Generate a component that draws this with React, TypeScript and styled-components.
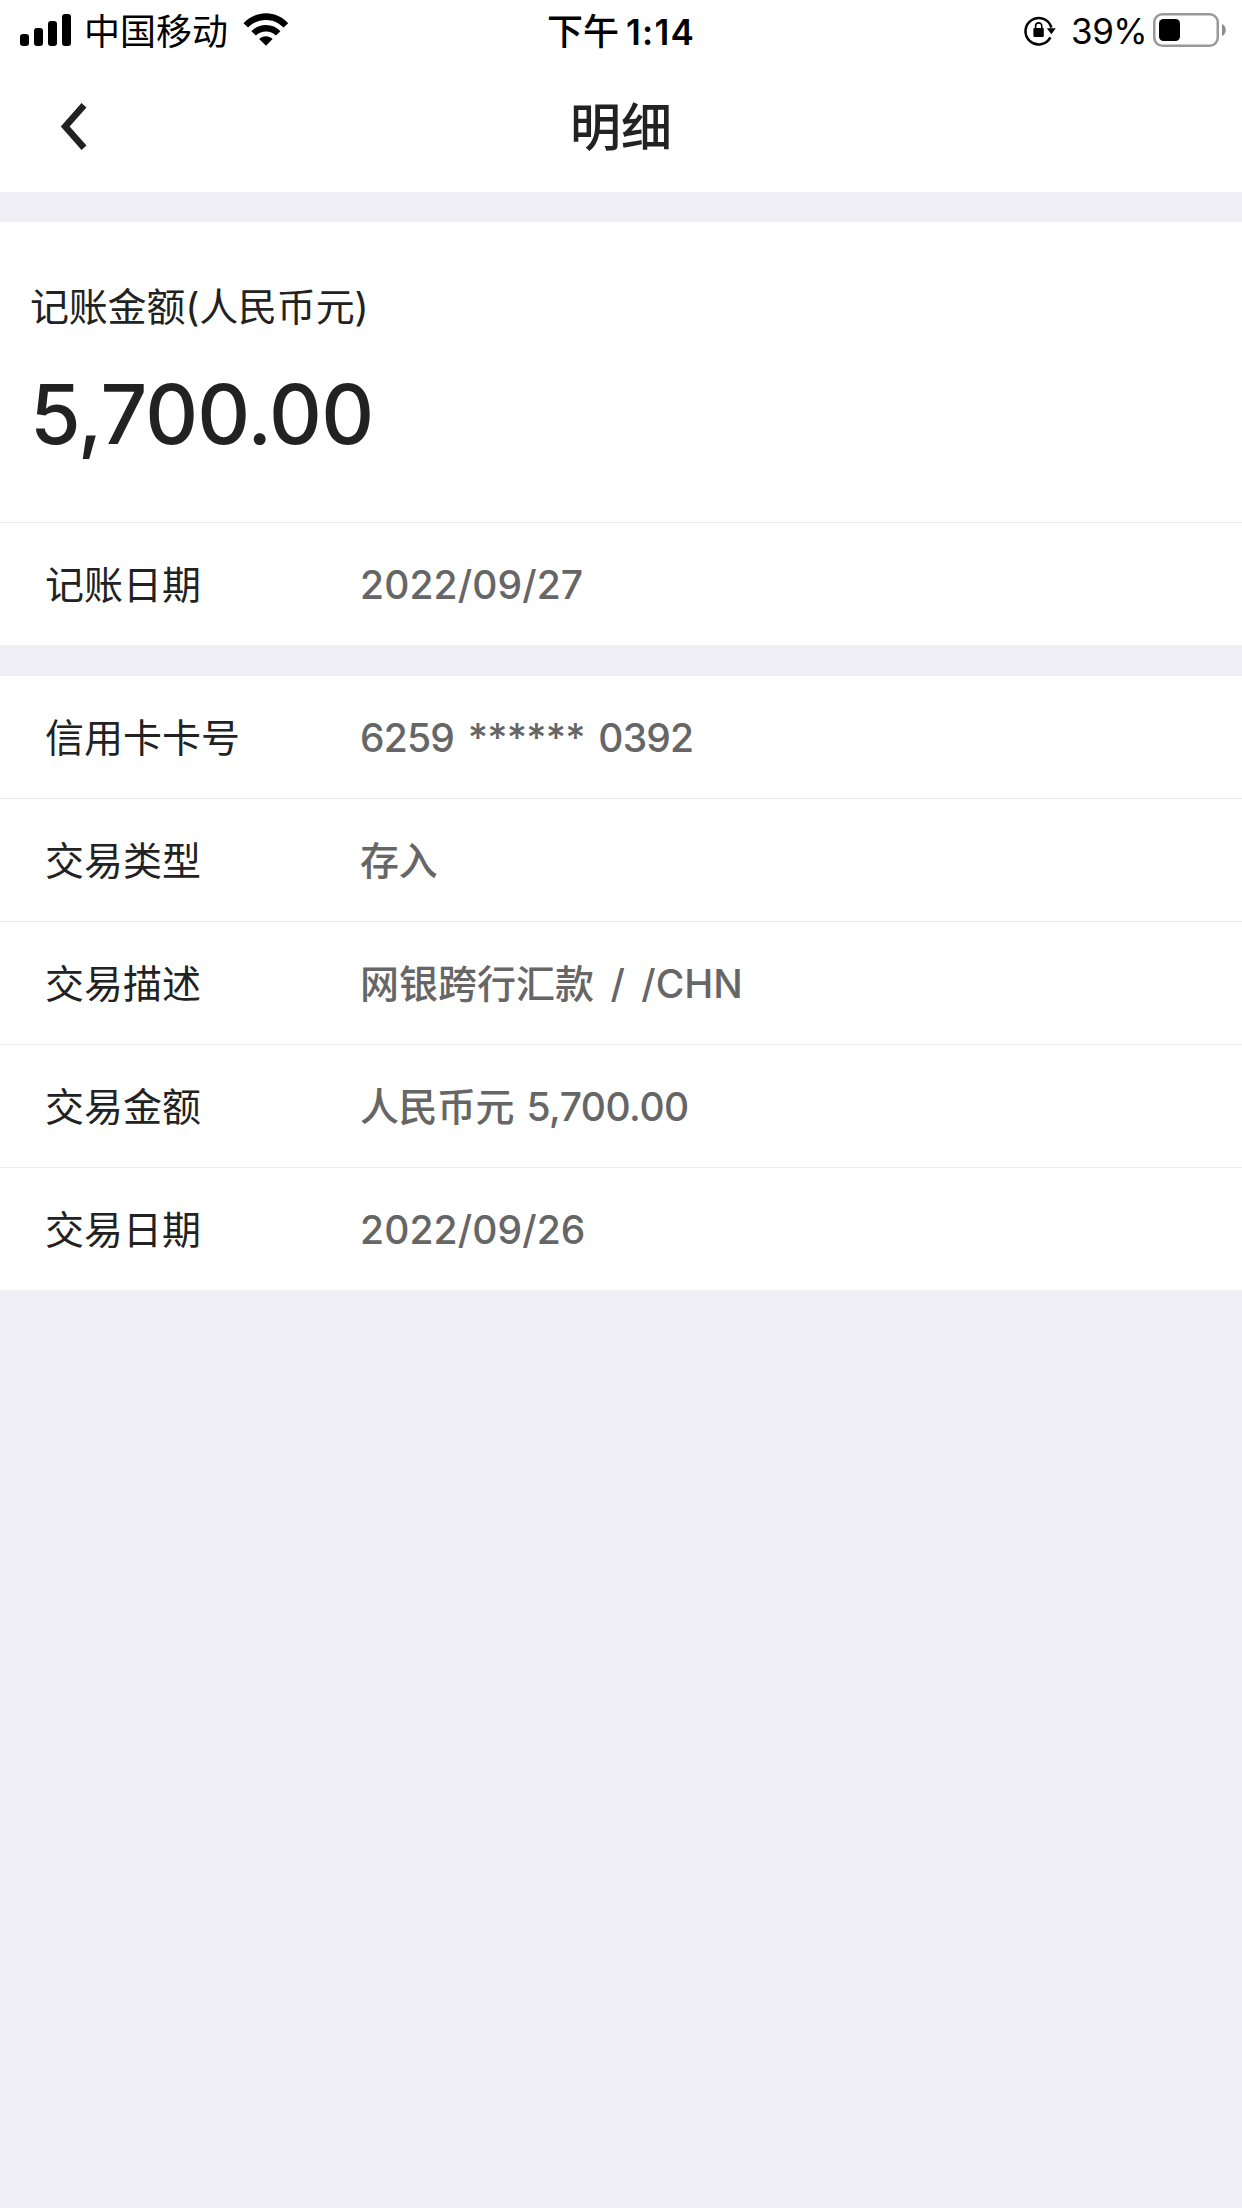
import React from "react";
import styled, { createGlobalStyle } from "styled-components";

type DetailItem = {
  label: string;
  value: string;
  spacing?: number;
  wordGap?: number;
};

const postingItems: DetailItem[] = [
  { label: "记账日期", value: "2022/09/27", spacing: 0.1 },
];

const tradeItems: DetailItem[] = [
  {
    label: "信用卡卡号",
    value: "6259 ****** 0392",
    spacing: -0.8,
    wordGap: 4,
  },
  { label: "交易类型", value: "存入", spacing: -0.5 },
  { label: "交易描述", value: "网银跨行汇款 / /CHN", wordGap: 6 },
  { label: "交易金额", value: "人民币元 5,700.00", spacing: -0.5, wordGap: 2.5 },
  { label: "交易日期", value: "2022/09/26", spacing: 0.1 },
];

const SignalIcon = () => (
  <svg width="52" height="32" viewBox="0 0 52 32">
    <rect x="0" y="20" width="9" height="12" rx="3" />
    <rect x="14" y="14" width="9" height="18" rx="3" />
    <rect x="28" y="7" width="9" height="25" rx="3" />
    <rect x="42" y="0" width="9" height="32" rx="3" />
  </svg>
);

const WifiIcon = () => (
  <svg width="46" height="34" viewBox="0 0 46 34">
    <path d="M0.5 10.2C6.5 4 14.3 0.3 23 0.3S39.5 4 45.2 10.2L40.6 14.6C35.8 9.6 29.8 6.9 23 6.9S10 9.6 5.1 14.6Z" />
    <path d="M8.3 18.2C12.2 14.2 17.2 12 23 12S33.6 14.2 37.4 18.2L32.9 22.5C30.1 19.8 26.8 18.4 23 18.4S15.7 19.8 12.9 22.5Z" />
    <path d="M16.2 26.1C20 22.3 25.8 22.3 29.6 26.1L23 32.8Z" />
  </svg>
);

const RotationLockIcon = () => (
  <svg width="33" height="30" viewBox="0 0 33 30" fill="none">
    <path
      d="M26.4 21.4A13.2 13.2 0 1 1 27.4 11.6"
      stroke="#000"
      strokeWidth="2.5"
    />
    <path d="M22.8 12.2H31.8L27.4 18.2Z" fill="#000" />
    <rect x="9.4" y="12" width="10.4" height="9" rx="1" fill="#000" />
    <path
      d="M11.6 12.5V10A3.1 3.1 0 0 1 17.8 10V12.5"
      stroke="#000"
      strokeWidth="1.6"
    />
  </svg>
);

const BatteryIcon = () => (
  <svg width="74" height="34" viewBox="0 0 74 34" fill="none">
    <rect
      x="1.25"
      y="1.25"
      width="63.5"
      height="31.5"
      rx="8"
      stroke="#999"
      strokeWidth="2.5"
    />
    <rect x="6" y="6" width="21" height="22" rx="4.5" fill="#000" />
    <path d="M69 11C74 13 74 21 69 23Z" fill="#8c8c8c" />
  </svg>
);

const BackIcon = () => (
  <svg width="28" height="47" viewBox="0 0 28 47" fill="none">
    <path d="M24 2.2L5.2 23.5L24 44.8" stroke="#222" strokeWidth="6.6" />
  </svg>
);

const DetailList = ({ items }: { items: DetailItem[] }) => (
  <List>
    {items.map(({ label, value, spacing, wordGap }) => (
      <Row key={label}>
        <Label>{label}</Label>
        <Value $spacing={spacing} $wordGap={wordGap}>
          {value}
        </Value>
      </Row>
    ))}
  </List>
);

const App = () => {
  return (
    <Page>
      <GlobalStyle />
      <Header>
        <StatusBar>
          <StatusLeft>
            <SignalIcon />
            <Carrier>中国移动</Carrier>
            <WifiIcon />
          </StatusLeft>
          <Clock>
            下午<b>1:14</b>
          </Clock>
          <StatusRight>
            <LockSlot>
              <RotationLockIcon />
            </LockSlot>
            <Percent>39%</Percent>
            <BatteryIcon />
          </StatusRight>
        </StatusBar>
        <NavBar>
          <BackButton aria-label="返回">
            <BackIcon />
          </BackButton>
          <Title>明细</Title>
        </NavBar>
      </Header>
      <Card $gap={30}>
        <Summary>
          <Caption>记账金额(人民币元)</Caption>
          <Amount>5,700.00</Amount>
        </Summary>
        <DetailList items={postingItems} />
      </Card>
      <Card $gap={31}>
        <DetailList items={tradeItems} />
      </Card>
    </Page>
  );
};

const GlobalStyle = createGlobalStyle`
  * {
    box-sizing: border-box;
  }

  body {
    margin: 0;
    background-color: #efeff5;
    font-family: Inter, "Noto Sans CJK SC", sans-serif;
  }

  svg {
    display: block;
    flex-shrink: 0;
  }
`;

const Page = styled.div`
  width: 1242px;
  min-height: 2208px;
  display: flex;
  flex-direction: column;
  background-color: #efeff5;
  color: #222;
`;

const Header = styled.header`
  height: 192px;
  background-color: #fff;
`;

const StatusBar = styled.div`
  height: 60px;
  padding: 0 15px;
  display: grid;
  grid-template-columns: 1fr auto 1fr;
  align-items: center;
  color: #000;
  line-height: 54px;
`;

const StatusLeft = styled.div`
  padding-left: 5px;
  display: flex;
  align-items: center;
`;

const Carrier = styled.span`
  margin: 0 15px 0 12px;
  padding-top: 3px;
  font-size: 36px;
`;

const Clock = styled.div`
  padding-top: 3px;
  display: flex;
  align-items: center;
  font-size: 36px;
  font-weight: 500;

  b {
    margin-left: 7px;
    font-size: 35px;
    font-weight: 600;
    letter-spacing: 1.2px;
  }
`;

const StatusRight = styled.div`
  display: flex;
  justify-content: flex-end;
  align-items: center;
`;

const LockSlot = styled.span`
  padding-top: 2px;
`;

const Percent = styled.span`
  margin: 0 6px 0 14px;
  padding-top: 2px;
  font-size: 35px;
  letter-spacing: -0.6px;
`;

const NavBar = styled.nav`
  height: 132px;
  padding: 0 60px;
  display: grid;
  grid-template-columns: 1fr auto 1fr;
  align-items: center;
`;

const BackButton = styled.button`
  justify-self: start;
  padding: 0;
  border: 0;
  background: none;
`;

const Title = styled.h1`
  margin: 0;
  padding-top: 3px;
  font-size: 51px;
  font-weight: 500;
  line-height: 128px;
`;

const Card = styled.section<{ $gap: number }>`
  margin-top: ${({ $gap }) => $gap}px;
  background-color: #fff;
`;

const Summary = styled.div`
  height: 301px;
  padding: 55px 30px 0;
  border-bottom: 1px solid #ebebeb;
`;

const Caption = styled.div`
  font-size: 39px;
  line-height: 60px;
  letter-spacing: -0.2px;
`;

const Amount = styled.div`
  margin-top: 28px;
  font-size: 82px;
  font-weight: 500;
  line-height: 100px;
  letter-spacing: -0.8px;
`;

const List = styled.div`
  display: flex;
  flex-direction: column;
`;

const Row = styled.div`
  height: 123px;
  padding: 2px 45px 0;
  display: grid;
  grid-template-columns: 315px 1fr;
  align-items: center;
  border-bottom: 1px solid #ebebeb;
  line-height: 60px;

  &:last-child {
    height: 122px;
    border-bottom: 0;
  }
`;

const Label = styled.span`
  font-size: 39px;
`;

const Value = styled.span<{ $spacing?: number; $wordGap?: number }>`
  color: #666;
  font-size: 39px;
  font-weight: 500;
  letter-spacing: ${({ $spacing = 0 }) => $spacing}px;
  word-spacing: ${({ $wordGap = 0 }) => $wordGap}px;
`;

export default App;
